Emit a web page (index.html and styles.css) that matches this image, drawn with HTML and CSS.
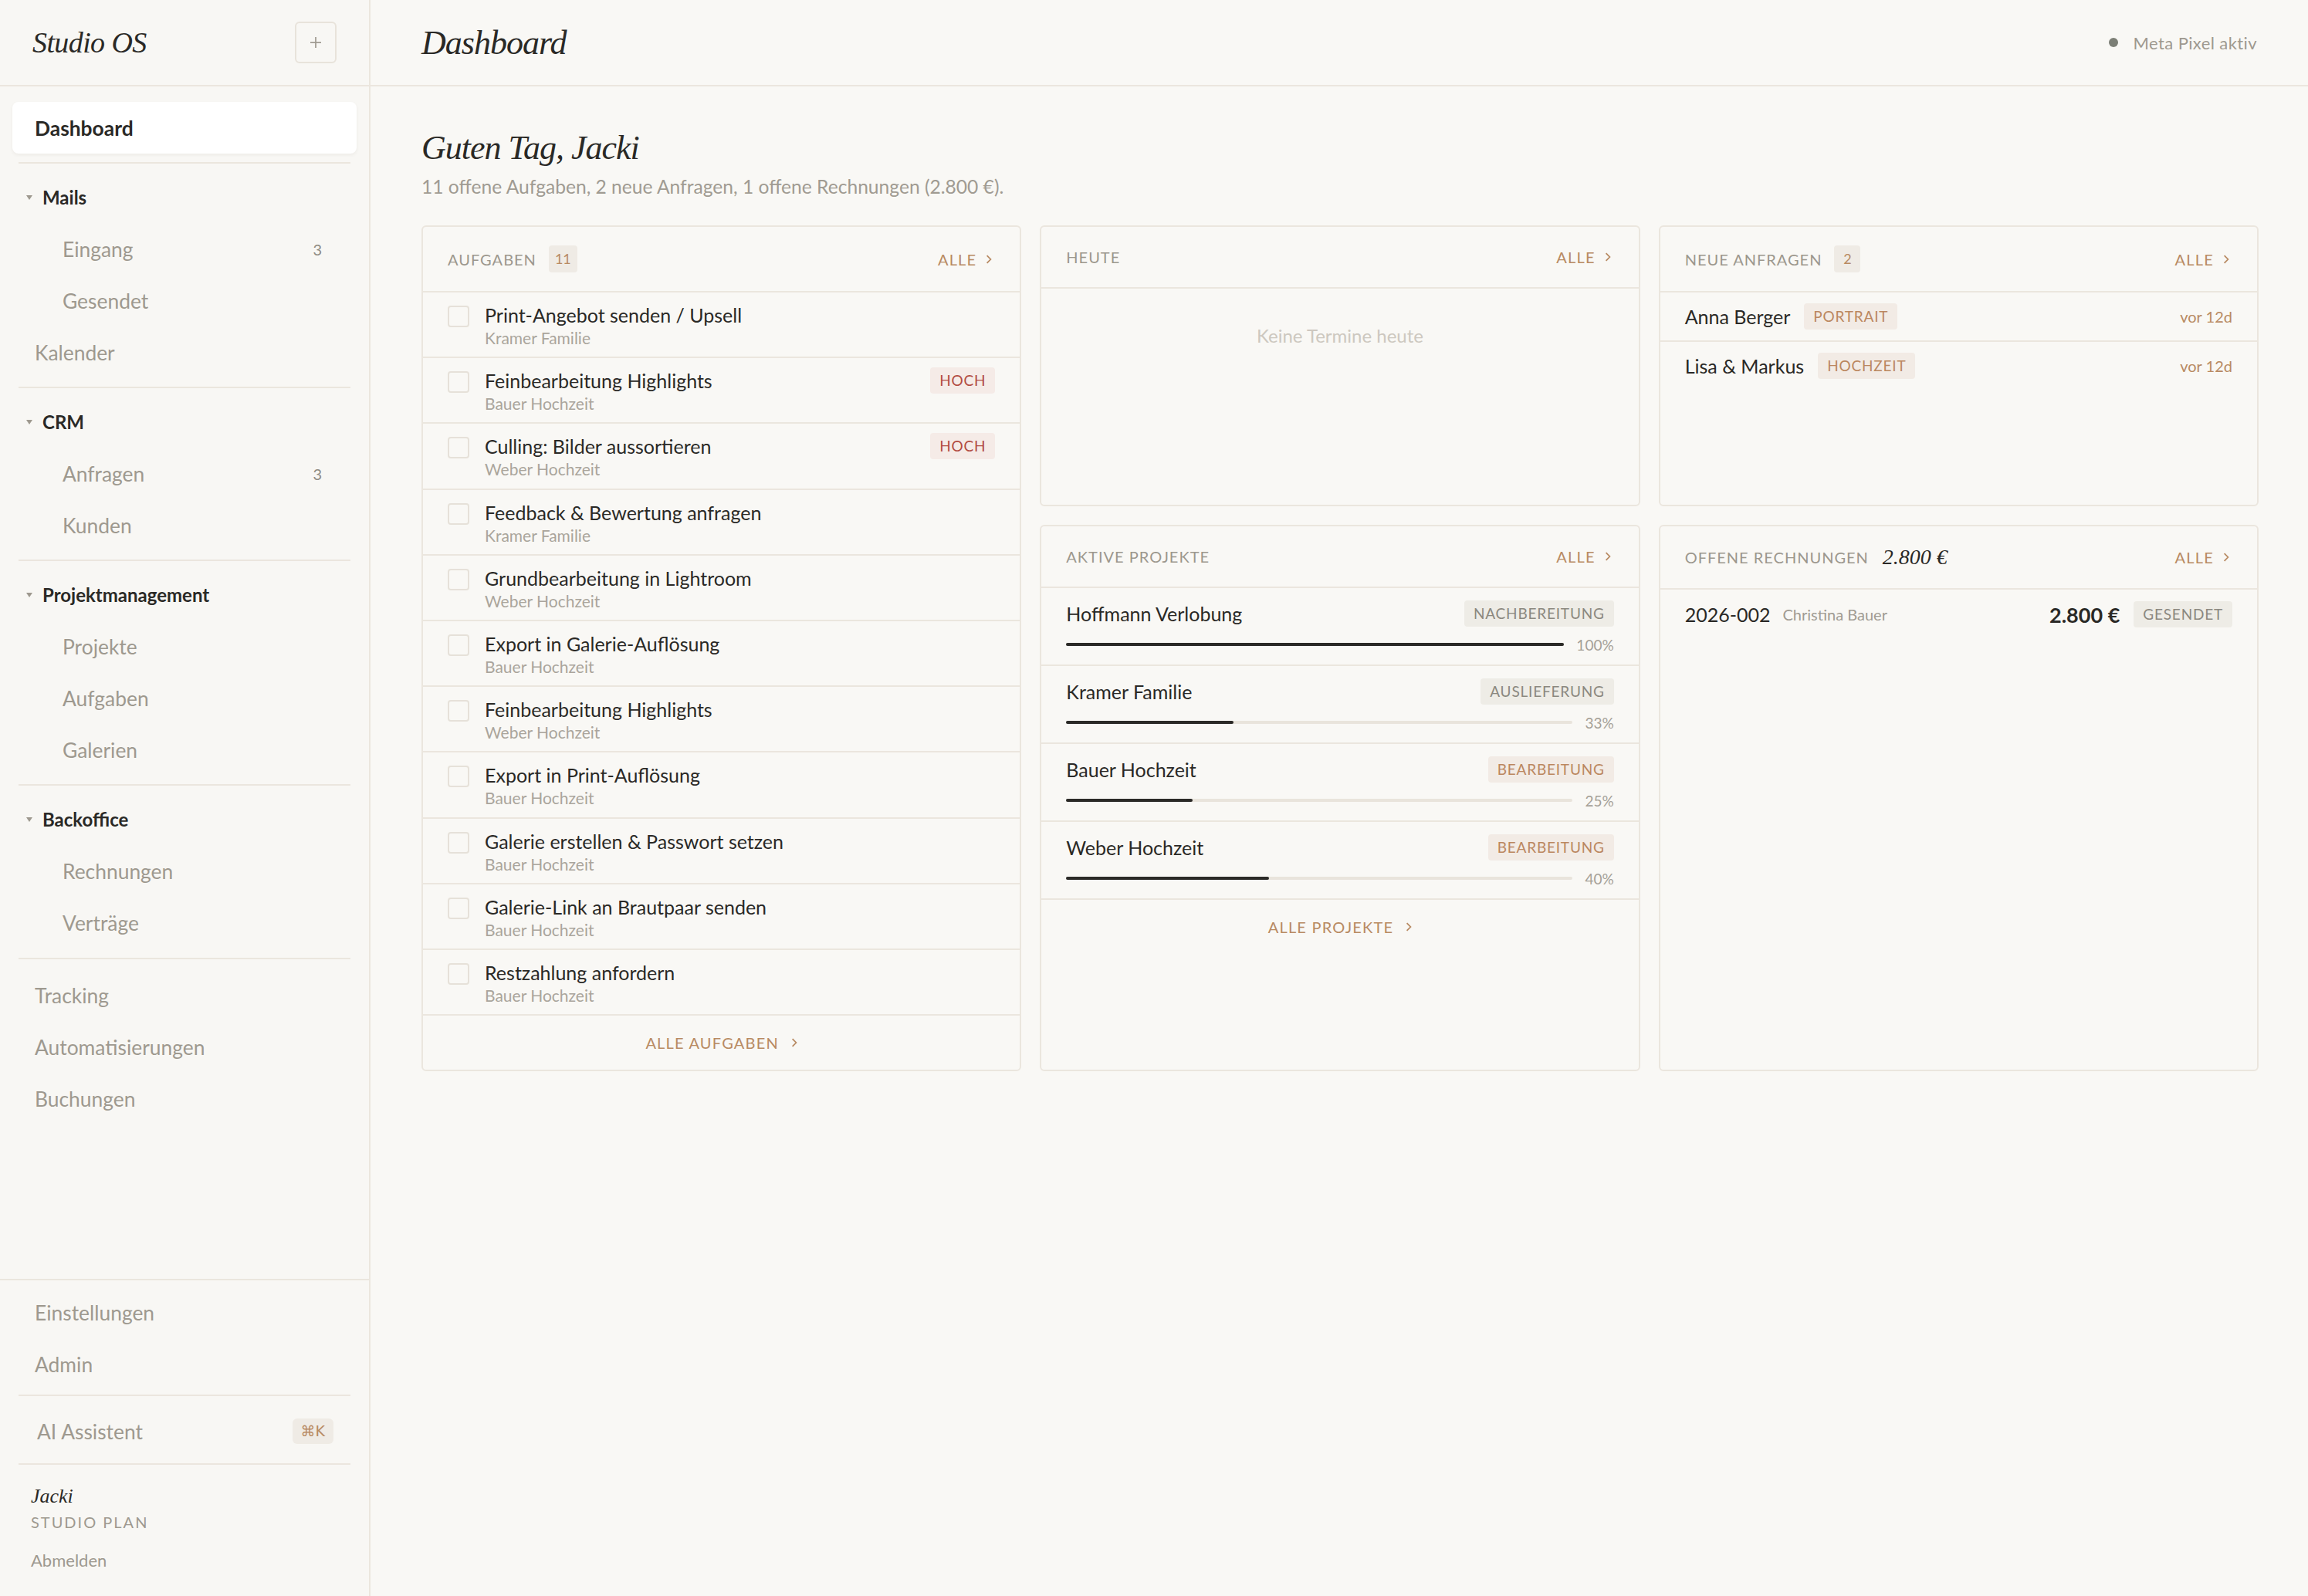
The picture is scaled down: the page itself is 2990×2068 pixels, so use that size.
FILE: index.html
```html
<!DOCTYPE html>
<html lang="de">
<head>
    <meta charset="UTF-8">
    <meta name="viewport" content="width=device-width, initial-scale=1.0">
    <title>Studio OS – Dashboard</title>
    <link rel="stylesheet" href="styles.css">
</head>
<body>

<div class="app">
    <aside class="sidebar">
        <div class="brand">
            <span class="logo">Studio OS</span>
            <button class="add-btn" title="Neu">
                <svg viewBox="0 0 8 8" width="7" height="7"><path d="M4 0v8M0 4h8" stroke="#a09b91" stroke-width="1" fill="none"/></svg>
            </button>
        </div>

        <nav class="nav">
            <a class="nav-item active">Dashboard</a>
            <div class="nav-divider"></div>

            <div class="nav-group"><svg class="caret" viewBox="0 0 4 3" width="4" height="3"><path d="M0 0h4L2 3z" fill="#9e998f"/></svg>Mails</div>
            <a class="nav-item sub">Eingang <span class="count">3</span></a>
            <a class="nav-item sub">Gesendet</a>
            <a class="nav-item">Kalender</a>
            <div class="nav-divider"></div>

            <div class="nav-group"><svg class="caret" viewBox="0 0 4 3" width="4" height="3"><path d="M0 0h4L2 3z" fill="#9e998f"/></svg>CRM</div>
            <a class="nav-item sub">Anfragen <span class="count">3</span></a>
            <a class="nav-item sub">Kunden</a>
            <div class="nav-divider"></div>

            <div class="nav-group"><svg class="caret" viewBox="0 0 4 3" width="4" height="3"><path d="M0 0h4L2 3z" fill="#9e998f"/></svg>Projektmanagement</div>
            <a class="nav-item sub">Projekte</a>
            <a class="nav-item sub">Aufgaben</a>
            <a class="nav-item sub">Galerien</a>
            <div class="nav-divider"></div>

            <div class="nav-group"><svg class="caret" viewBox="0 0 4 3" width="4" height="3"><path d="M0 0h4L2 3z" fill="#9e998f"/></svg>Backoffice</div>
            <a class="nav-item sub">Rechnungen</a>
            <a class="nav-item sub">Verträge</a>
            <div class="nav-divider wide"></div>

            <a class="nav-item">Tracking</a>
            <a class="nav-item">Automatisierungen</a>
            <a class="nav-item">Buchungen</a>
        </nav>

        <div class="sidebar-bottom">
            <a class="nav-item">Einstellungen</a>
            <a class="nav-item">Admin</a>
            <div class="nav-divider tight"></div>
            <a class="nav-item ai">AI Assistent <span class="kbd">⌘K</span></a>
            <div class="nav-divider last"></div>
            <div class="user">
                <div class="user-name">Jacki</div>
                <div class="user-plan">Studio Plan</div>
                <a class="logout">Abmelden</a>
            </div>
        </div>
    </aside>

    <main class="main">
        <header class="topbar">
            <h1 class="page-title">Dashboard</h1>
            <div class="pixel-status"><span class="dot"></span>Meta Pixel aktiv</div>
        </header>

        <section class="content">
            <h2 class="greeting">Guten Tag, Jacki</h2>
            <p class="summary">11 offene Aufgaben, 2 neue Anfragen, 1 offene Rechnungen (2.800 €).</p>

            <div class="grid">
                <!-- Aufgaben -->
                <div class="card tasks-card">
                    <div class="card-head">
                        <span class="card-label">Aufgaben</span>
                        <span class="head-badge">11</span>
                        <a class="link">Alle <svg class="chev" viewBox="0 0 5 8" width="4" height="7"><path d="M1 1l3 3-3 3" fill="none" stroke="currentColor" stroke-width="1.1"/></svg></a>
                    </div>
                    <div class="task">
                        <span class="checkbox"></span>
                        <div class="task-body"><div class="task-title">Print-Angebot senden / Upsell</div><div class="task-sub">Kramer Familie</div></div>
                    </div>
                    <div class="task">
                        <span class="checkbox"></span>
                        <div class="task-body"><div class="task-title">Feinbearbeitung Highlights</div><div class="task-sub">Bauer Hochzeit</div></div>
                        <span class="tag tag-red">Hoch</span>
                    </div>
                    <div class="task">
                        <span class="checkbox"></span>
                        <div class="task-body"><div class="task-title">Culling: Bilder aussortieren</div><div class="task-sub">Weber Hochzeit</div></div>
                        <span class="tag tag-red">Hoch</span>
                    </div>
                    <div class="task">
                        <span class="checkbox"></span>
                        <div class="task-body"><div class="task-title">Feedback &amp; Bewertung anfragen</div><div class="task-sub">Kramer Familie</div></div>
                    </div>
                    <div class="task">
                        <span class="checkbox"></span>
                        <div class="task-body"><div class="task-title">Grundbearbeitung in Lightroom</div><div class="task-sub">Weber Hochzeit</div></div>
                    </div>
                    <div class="task">
                        <span class="checkbox"></span>
                        <div class="task-body"><div class="task-title">Export in Galerie-Auflösung</div><div class="task-sub">Bauer Hochzeit</div></div>
                    </div>
                    <div class="task">
                        <span class="checkbox"></span>
                        <div class="task-body"><div class="task-title">Feinbearbeitung Highlights</div><div class="task-sub">Weber Hochzeit</div></div>
                    </div>
                    <div class="task">
                        <span class="checkbox"></span>
                        <div class="task-body"><div class="task-title">Export in Print-Auflösung</div><div class="task-sub">Bauer Hochzeit</div></div>
                    </div>
                    <div class="task">
                        <span class="checkbox"></span>
                        <div class="task-body"><div class="task-title">Galerie erstellen &amp; Passwort setzen</div><div class="task-sub">Bauer Hochzeit</div></div>
                    </div>
                    <div class="task">
                        <span class="checkbox"></span>
                        <div class="task-body"><div class="task-title">Galerie-Link an Brautpaar senden</div><div class="task-sub">Bauer Hochzeit</div></div>
                    </div>
                    <div class="task">
                        <span class="checkbox"></span>
                        <div class="task-body"><div class="task-title">Restzahlung anfordern</div><div class="task-sub">Bauer Hochzeit</div></div>
                    </div>
                    <div class="card-foot">
                        <a class="link">Alle Aufgaben <svg class="chev" viewBox="0 0 5 8" width="4" height="7"><path d="M1 1l3 3-3 3" fill="none" stroke="currentColor" stroke-width="1.1"/></svg></a>
                    </div>
                </div>

                <!-- Heute -->
                <div class="card">
                    <div class="card-head">
                        <span class="card-label">Heute</span>
                        <a class="link">Alle <svg class="chev" viewBox="0 0 5 8" width="4" height="7"><path d="M1 1l3 3-3 3" fill="none" stroke="currentColor" stroke-width="1.1"/></svg></a>
                    </div>
                    <div class="empty">Keine Termine heute</div>
                </div>

                <!-- Neue Anfragen -->
                <div class="card">
                    <div class="card-head">
                        <span class="card-label">Neue Anfragen</span>
                        <span class="head-badge">2</span>
                        <a class="link">Alle <svg class="chev" viewBox="0 0 5 8" width="4" height="7"><path d="M1 1l3 3-3 3" fill="none" stroke="currentColor" stroke-width="1.1"/></svg></a>
                    </div>
                    <div class="row">
                        <span class="row-name">Anna Berger</span>
                        <span class="tag tag-tan">Portrait</span>
                        <span class="ago">vor 12d</span>
                    </div>
                    <div class="row">
                        <span class="row-name">Lisa &amp; Markus</span>
                        <span class="tag tag-tan">Hochzeit</span>
                        <span class="ago">vor 12d</span>
                    </div>
                </div>

                <!-- Aktive Projekte -->
                <div class="card">
                    <div class="card-head">
                        <span class="card-label">Aktive Projekte</span>
                        <a class="link">Alle <svg class="chev" viewBox="0 0 5 8" width="4" height="7"><path d="M1 1l3 3-3 3" fill="none" stroke="currentColor" stroke-width="1.1"/></svg></a>
                    </div>
                    <div class="project">
                        <div class="project-top"><span class="row-name">Hoffmann Verlobung</span><span class="tag tag-grey">Nachbereitung</span></div>
                        <div class="progress"><div class="track"><div class="fill" style="width: 100%"></div></div><span class="pct">100%</span></div>
                    </div>
                    <div class="project">
                        <div class="project-top"><span class="row-name">Kramer Familie</span><span class="tag tag-grey">Auslieferung</span></div>
                        <div class="progress"><div class="track"><div class="fill" style="width: 33%"></div></div><span class="pct">33%</span></div>
                    </div>
                    <div class="project">
                        <div class="project-top"><span class="row-name">Bauer Hochzeit</span><span class="tag tag-tan">Bearbeitung</span></div>
                        <div class="progress"><div class="track"><div class="fill" style="width: 25%"></div></div><span class="pct">25%</span></div>
                    </div>
                    <div class="project">
                        <div class="project-top"><span class="row-name">Weber Hochzeit</span><span class="tag tag-tan">Bearbeitung</span></div>
                        <div class="progress"><div class="track"><div class="fill" style="width: 40%"></div></div><span class="pct">40%</span></div>
                    </div>
                    <div class="card-foot">
                        <a class="link">Alle Projekte <svg class="chev" viewBox="0 0 5 8" width="4" height="7"><path d="M1 1l3 3-3 3" fill="none" stroke="currentColor" stroke-width="1.1"/></svg></a>
                    </div>
                </div>

                <!-- Offene Rechnungen -->
                <div class="card">
                    <div class="card-head">
                        <span class="card-label">Offene Rechnungen</span>
                        <span class="head-sum">2.800 €</span>
                        <a class="link">Alle <svg class="chev" viewBox="0 0 5 8" width="4" height="7"><path d="M1 1l3 3-3 3" fill="none" stroke="currentColor" stroke-width="1.1"/></svg></a>
                    </div>
                    <div class="row invoice">
                        <span class="row-name">2026-002</span>
                        <span class="client">Christina Bauer</span>
                        <span class="amount">2.800 €</span>
                        <span class="tag tag-grey">Gesendet</span>
                    </div>
                </div>
            </div>
        </section>
    </main>
</div>

</body>
</html>
```

FILE: styles.css
```css
body {
    margin: 0;
    zoom: 2;
    font-family: "Lato", "Noto Sans", sans-serif;
    color: #2a2926;
    background: #f9f8f5;
}
a {
    cursor: pointer;
}
.app {
    display: flex;
    height: 1034px;
}

/* sidebar */
.sidebar {
    width: 240px;
    flex-shrink: 0;
    box-sizing: border-box;
    border-right: 1px solid #ebe6de;
    display: flex;
    flex-direction: column;
    background: #f8f7f4;
}
.brand {
    height: 56px;
    box-sizing: border-box;
    border-bottom: 1px solid #ebe6de;
    display: flex;
    align-items: center;
    justify-content: space-between;
    padding: 0 21px 0 21px;
}
.logo {
    font-family: "Liberation Serif", "DejaVu Serif", serif;
    font-style: italic;
    font-size: 19px;
    letter-spacing: -0.3px;
    color: #2a2926;
}
.add-btn {
    width: 27px;
    height: 27px;
    border: 1px solid #e8e3db;
    border-radius: 3px;
    background: transparent;
    display: flex;
    align-items: center;
    justify-content: center;
    padding: 0;
}
.nav {
    padding: 10px 8px 0;
    display: flex;
    flex-direction: column;
}
.nav-item {
    height: 33.5px;
    display: flex;
    align-items: center;
    padding: 0 14.5px;
    font-size: 13.2px;
    color: #9e998f;
    border-radius: 4px;
}
.nav-item.active {
    background: #fff;
    color: #2a2926;
    font-weight: 700;
    box-shadow: 0 1px 2px rgba(60, 50, 30, 0.06);
}
.nav-item.sub {
    padding-left: 32.5px;
}
.count {
    margin-left: auto;
    margin-right: 8px;
    font-size: 10px;
    color: #8f8b83;
}
.nav-divider {
    height: 1px;
    background: #ebe6de;
    margin: 5.5px 4px 5px;
}
.nav-divider.wide {
    margin: 6px 4px 6.5px;
}
.nav-group {
    height: 33.5px;
    display: flex;
    align-items: center;
    padding-left: 9px;
    font-size: 12px;
    font-weight: 700;
    color: #2a2926;
}
.caret {
    margin-right: 6.5px;
}
.sidebar-bottom {
    margin-top: auto;
    border-top: 1px solid #ebe6de;
    padding: 4px 8px 0;
    display: flex;
    flex-direction: column;
}
.nav-divider.tight {
    margin: 3px 4px 6px;
}
.nav-divider.last {
    margin: 4px 4px 0;
}
.nav-item.ai {
    padding-left: 16px;
    padding-right: 15px;
}
.kbd {
    margin-left: auto;
    font-family: "DejaVu Sans", sans-serif;
    font-size: 9.5px;
    line-height: 16.5px;
    padding: 0 5.5px;
    background: #efebe5;
    color: #b88a62;
    border-radius: 3px;
}
.user {
    padding: 12px 12px 15.5px;
}
.user-name {
    font-family: "Liberation Serif", "DejaVu Serif", serif;
    font-style: italic;
    font-size: 13px;
    line-height: 17px;
}
.user-plan {
    margin-top: 1px;
    font-size: 10px;
    line-height: 14px;
    letter-spacing: 1px;
    text-transform: uppercase;
    color: #9e998f;
}
.logout {
    display: block;
    margin-top: 10.5px;
    font-size: 11px;
    line-height: 15px;
    color: #9e998f;
}

/* main */
.main {
    flex: 1;
    display: flex;
    flex-direction: column;
    min-width: 0;
}
.topbar {
    height: 56px;
    flex-shrink: 0;
    box-sizing: border-box;
    border-bottom: 1px solid #ebe6de;
    display: flex;
    align-items: center;
    justify-content: space-between;
    padding: 0 33px 0 33px;
}
.page-title {
    margin: 0;
    font-family: "Liberation Serif", "DejaVu Serif", serif;
    font-style: italic;
    font-weight: 400;
    font-size: 22px;
    letter-spacing: -0.5px;
}
.pixel-status {
    display: flex;
    align-items: center;
    font-size: 11px;
    letter-spacing: 0.2px;
    color: #9e998f;
}
.dot {
    width: 6px;
    height: 6px;
    border-radius: 50%;
    background: #7c7f76;
    margin-right: 10px;
}
.content {
    padding: 26px 32px 0 33px;
}
.greeting {
    margin: 0;
    font-family: "Liberation Serif", "DejaVu Serif", serif;
    font-style: italic;
    font-weight: 400;
    font-size: 22px;
    line-height: 28px;
    letter-spacing: -0.5px;
}
.summary {
    margin: 3px 0 0;
    font-size: 12.3px;
    line-height: 16px;
    color: #a09b92;
}
.grid {
    margin-top: 17px;
    display: grid;
    grid-template-columns: repeat(3, 1fr);
    grid-template-rows: auto 1fr;
    gap: 12px;
}

/* cards */
.card {
    border: 1px solid #ebe6de;
    border-radius: 3px;
    display: flex;
    flex-direction: column;
    min-width: 0;
}
.tasks-card {
    grid-row: span 2;
}
.card-head {
    display: flex;
    align-items: center;
    padding: 12px 18px 12px 16px;
    border-bottom: 1px solid #ebe6de;
}
.card-label {
    font-size: 10px;
    line-height: 15px;
    letter-spacing: 0.5px;
    text-transform: uppercase;
    color: #9c978d;
}
.head-badge {
    margin-left: 8px;
    min-width: 9px;
    padding: 0 4px;
    text-align: center;
    font-size: 9px;
    line-height: 17.5px;
    background: #efebe5;
    color: #b88a62;
    border-radius: 2px;
}
.head-sum {
    margin-left: 9px;
    font-family: "Liberation Serif", "DejaVu Serif", serif;
    font-style: italic;
    font-size: 14px;
    line-height: 16px;
    color: #2a2926;
}
.link {
    margin-left: auto;
    display: flex;
    align-items: center;
    font-size: 10px;
    line-height: 15px;
    letter-spacing: 0.6px;
    text-transform: uppercase;
    color: #b88a62;
}
.chev {
    margin-left: 6px;
}
.card-foot {
    height: 36px;
    box-sizing: border-box;
    border-top: 1px solid #ebe6de;
    display: flex;
    align-items: center;
    justify-content: center;
}
.card-foot .link {
    margin-left: 0;
}
.card-foot .chev {
    margin-left: 8px;
}

.task {
    display: flex;
    align-items: flex-start;
    gap: 10px;
    padding: 6px 16px 5.6px;
}
.task + .task {
    border-top: 1px solid #ebe6de;
}
.checkbox {
    width: 14px;
    height: 14px;
    box-sizing: border-box;
    border: 1px solid #e6e1d9;
    border-radius: 2px;
    margin-top: 2.5px;
    flex-shrink: 0;
}
.task-body {
    flex: 1;
    min-width: 0;
}
.task-title {
    font-size: 12.5px;
    line-height: 17px;
}
.task-sub {
    font-size: 10.5px;
    line-height: 13px;
    color: #aaa59c;
}

.tag {
    font-size: 9.5px;
    line-height: 17px;
    letter-spacing: 0.4px;
    text-transform: uppercase;
    padding: 0 6px;
    border-radius: 2px;
    white-space: nowrap;
}
.tag-red {
    background: #f5ebe7;
    color: #b24c42;
}
.tag-tan {
    background: #f2ebe5;
    color: #bb875f;
}
.tag-grey {
    background: #eeece6;
    color: #8b887f;
}

.empty {
    min-height: 140px;
    box-sizing: border-box;
    padding: 23px 16px 0;
    text-align: center;
    font-size: 12px;
    line-height: 15px;
    color: #cdc8c0;
}

.row {
    min-height: 31px;
    display: flex;
    align-items: center;
    padding: 0 16px;
}
.row + .row {
    border-top: 1px solid #ebe6de;
}
.row-name {
    font-size: 12.5px;
    line-height: 17px;
}
.row .tag {
    margin-left: 9px;
}
.ago {
    margin-left: auto;
    font-size: 10px;
    color: #b88a62;
}
.invoice {
    min-height: 32px;
}
.client {
    margin-left: 8px;
    font-size: 10px;
    color: #a09b92;
}
.amount {
    margin-left: auto;
    font-size: 13.5px;
    font-weight: 700;
}

.project {
    padding: 8px 16px 6.5px;
}
.project + .project {
    border-top: 1px solid #ebe6de;
}
.project-top {
    display: flex;
    align-items: center;
    justify-content: space-between;
    height: 17px;
}
.progress {
    margin-top: 5px;
    height: 13px;
    display: flex;
    align-items: center;
    gap: 8px;
}
.track {
    flex: 1;
    height: 2px;
    background: #e9e4dc;
    border-radius: 1px;
}
.fill {
    height: 2px;
    background: #2b2a27;
    border-radius: 1px;
}
.pct {
    font-size: 9.5px;
    color: #a5a097;
}
```
